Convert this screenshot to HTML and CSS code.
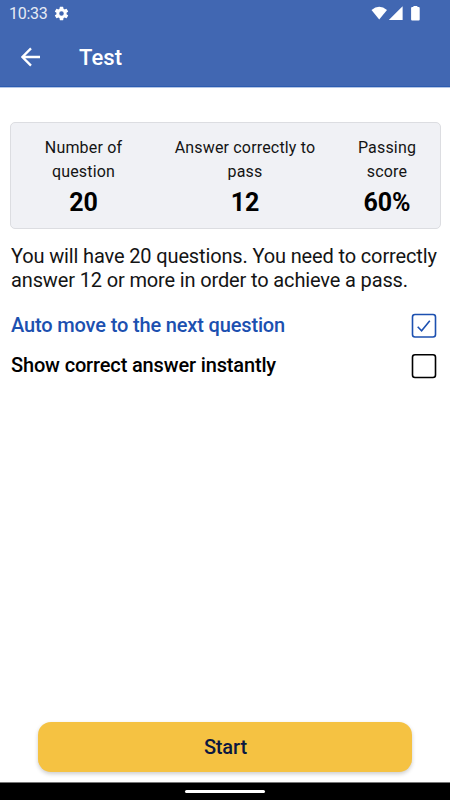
FILE: index.html
```html
<!DOCTYPE html>
<html lang="en">
<head>
<meta charset="utf-8">
<title>Test</title>
<link rel="stylesheet" href="styles.css">
</head>
<body>
<div class="screen">
  <header class="header">
    <div class="status">
      <span class="time">10:33</span>
      <svg class="gear" viewBox="0 0 24 24"><path fill="#fff" d="M19.14 12.94c.04-.3.06-.61.06-.94s-.02-.64-.07-.94l2.03-1.58a.49.49 0 0 0 .12-.61l-1.92-3.32a.49.49 0 0 0-.59-.22l-2.39.96a7 7 0 0 0-1.62-.94l-.36-2.54A.48.48 0 0 0 13.92 2.4h-3.84a.48.48 0 0 0-.47.41l-.36 2.54a7 7 0 0 0-1.62.94l-2.39-.96a.49.49 0 0 0-.59.22L2.74 8.87a.48.48 0 0 0 .12.61l2.03 1.58a6 6 0 0 0 0 1.88l-2.03 1.58a.49.49 0 0 0-.12.61l1.92 3.32c.12.22.37.29.59.22l2.39-.96a7 7 0 0 0 1.62.94l.36 2.54c.05.24.24.41.48.41h3.84c.24 0 .44-.17.47-.41l.36-2.54a7 7 0 0 0 1.62-.94l2.39.96c.22.08.47 0 .59-.22l1.92-3.32a.48.48 0 0 0-.12-.61zM12 15.2A3.2 3.2 0 1 1 12 8.8a3.2 3.2 0 0 1 0 6.4z"/></svg>
      <svg class="signals" viewBox="0 0 49 16"><g fill="#fff"><path d="M0.5 4Q8.2-2.3 16 4L8.2 13.5z"/><path d="M31.6 .2V14H17.8z"/><path d="M42.4 0h4v1h1.3q1 0 1 1v11.5q0 1-1 1h-6.6q-1 0-1-1V2q0-1 1-1h1.3z"/></g></svg>
    </div>
    <div class="toolbar">
      <svg class="back" viewBox="0 0 20 20"><path d="M19 10H1.5M10 1.4L1.4 10L10 18.6" fill="none" stroke="#fff" stroke-width="2.3"/></svg>
      <h1 class="title">Test</h1>
    </div>
  </header>
  <main class="content">
    <section class="summary">
      <div class="stat"><span class="label">Number of<br>question</span><strong class="value">20</strong></div>
      <div class="stat"><span class="label">Answer correctly to<br>pass</span><strong class="value">12</strong></div>
      <div class="stat"><span class="label">Passing<br>score</span><strong class="value">60%</strong></div>
    </section>
    <p class="intro">You will have 20 questions. You need to correctly<br>answer 12 or more in order to achieve a pass.</p>
    <div class="option selected"><span>Auto move to the next question</span>
      <svg class="box" viewBox="0 0 26 26"><rect x="1.5" y="1.5" width="23" height="22.5" rx="2.5"/><path d="M6.7 13.8L10.6 17.8L18.8 7.8"/></svg></div>
    <div class="option"><span>Show correct answer instantly</span>
      <svg class="box" viewBox="0 0 26 26"><rect x="1.5" y="1.8" width="23" height="22.7" rx="2.5"/></svg></div>
  </main>
  <button class="start">Start</button>
  <div class="navbar"><span class="handle"></span></div>
</div>
</body>
</html>
```

FILE: styles.css
```css
* { box-sizing: border-box; }
body { margin: 0; font-family: Roboto, sans-serif; color: #141414; background: #fff; }
.screen { width: 450px; height: 800px; display: flex; flex-direction: column; overflow: hidden; }
.header { height: 87px; flex: none; background: #4167b2; color: #fff; border-bottom: 1px solid #2c5cb0; box-shadow: 0 1px 0 #b5c6e6; }
.status { height: 27px; display: flex; align-items: center; padding: 0 30px 0 9px; }
.time { font-size: 16px; line-height: 26px; letter-spacing: -0.3px; color: #e6ebf5; padding-top: 1px; }
.gear { width: 17px; height: 17px; margin-left: 6px; }
.signals { width: 49px; height: 16px; margin-left: auto; }
.toolbar { height: 60px; display: flex; align-items: center; padding-left: 21px; }
.back { width: 20px; height: 20px; }
.title { margin: 1px 0 0 38px; font-size: 22px; line-height: 30px; font-weight: 500; letter-spacing: 0.1px; }
.content { flex: 1; padding: 35px 10px 0; }
.summary { width: 431px; height: 107px; display: grid; grid-template-columns: 145px 178px 106px; padding-top: 13px; background: #f0f1f5; border: 1px solid #dcdde1; border-radius: 5px; }
.stat { display: flex; flex-direction: column; align-items: center; text-align: center; }
.label { font-size: 16px; line-height: 24px; letter-spacing: 0.17px; }
.value { font-size: 25px; line-height: 38px; font-weight: 700; color: #000; }
.intro { margin: 15px 0 0 1px; font-size: 20px; line-height: 24px; letter-spacing: -0.14px; white-space: nowrap; }
.option { height: 40px; display: flex; align-items: center; justify-content: space-between; padding: 0 3px 0 1px; font-size: 20px; line-height: 24px; font-weight: 500; letter-spacing: -0.15px; color: #000; }
.selected { color: #1c50b0; margin-top: 13px; }
.box { width: 26px; height: 26px; margin-top: 1px; fill: none; stroke: currentColor; stroke-width: 1.6; }
.start { width: 374px; height: 50px; flex: none; margin: 0 0 10px 38.4px; padding: 0; border: 0; border-radius: 13px; background: #f5c242; box-shadow: 0 2px 4px rgba(0,0,0,.2); font: 500 20px/50px Roboto, sans-serif; letter-spacing: -0.15px; color: #0b1740; }
.navbar { height: 18px; flex: none; background: #000; border-top: 1px solid #777; display: flex; justify-content: center; align-items: center; }
.handle { width: 80px; height: 3px; border-radius: 2px; background: #fff; }
```
